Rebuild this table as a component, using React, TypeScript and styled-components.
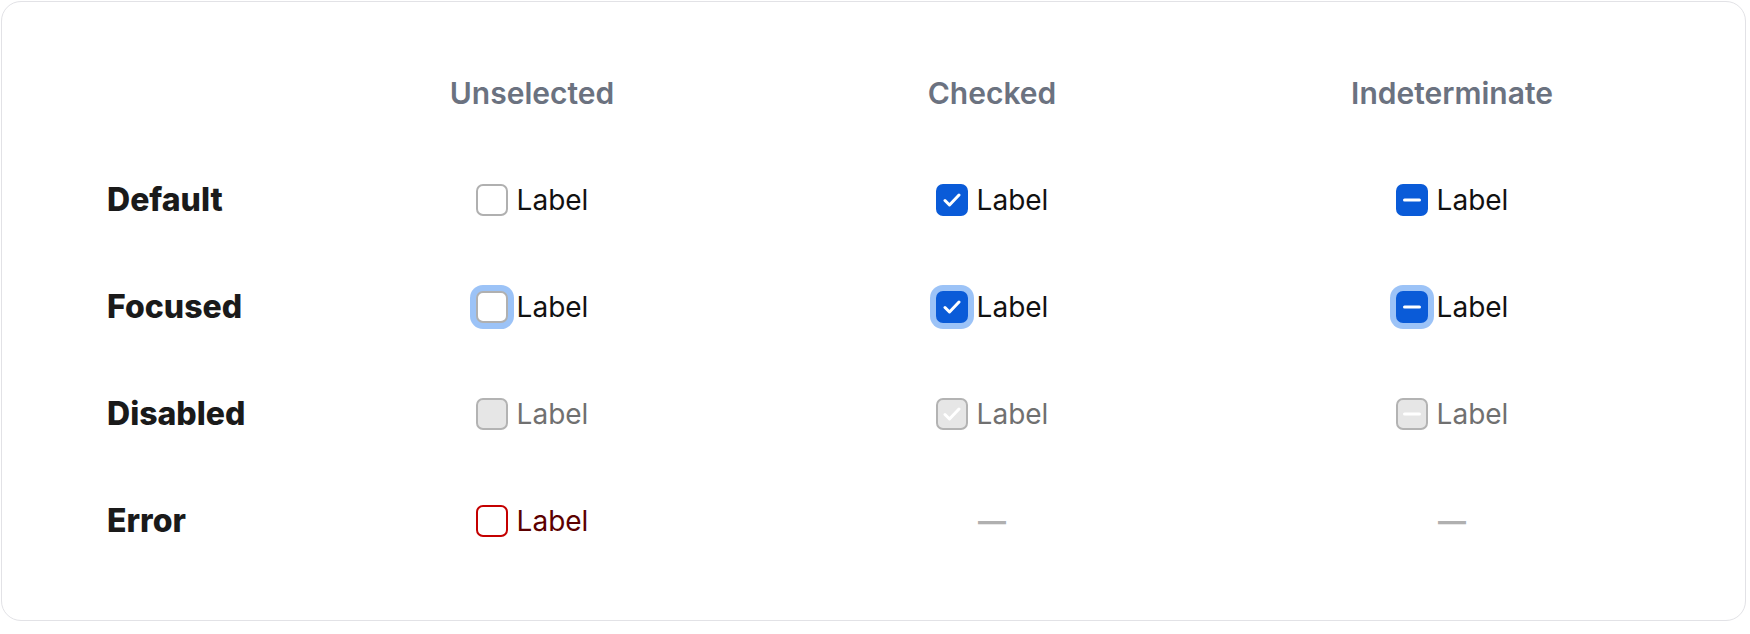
import React from "react";
import styled, { createGlobalStyle, css } from "styled-components";

const GlobalStyle = createGlobalStyle`
  html, body { margin: 0; padding: 0; background: #ffffff; }
  body { font-family: Inter, "Noto Sans", sans-serif; }
`;

const Page = styled.div`
  padding: 1px 4px 13px 1px;
`;

const Card = styled.div`
  width: 1745px;
  height: 620px;
  box-sizing: border-box;
  border: 1.5px solid #e2e2e6;
  border-radius: 20px;
  background: #fff;
  padding: 37px 63px 0 105px;
`;

const Grid = styled.div`
  display: grid;
  grid-template-columns: 195px repeat(3, 1fr);
  grid-auto-rows: 107px;
  align-items: center;
`;

const ColHead = styled.div`
  text-align: center;
  font-size: 30px;
  font-weight: 600;
  color: #6b7280;
`;

const RowHead = styled.div`
  font-size: 32px;
  font-weight: 800;
  color: #1a1a1a;
`;

const Cell = styled.div`
  display: flex;
  justify-content: center;
  align-items: center;
`;

const Option = styled.label`
  display: inline-flex;
  align-items: center;
  gap: 9px;
`;

type Variant = "default" | "disabled" | "error";

const Box = styled.span<{ $checked?: boolean; $variant: Variant; $focus?: boolean }>`
  width: 32px;
  height: 32px;
  box-sizing: border-box;
  border-radius: 7px;
  display: inline-flex;
  align-items: center;
  justify-content: center;
  border: 2px solid #b0b0b0;
  background: #fff;
  ${(p) =>
    p.$checked &&
    css`
      background: #0a5bd8;
      border-color: #0a5bd8;
    `}
  ${(p) =>
    p.$variant === "disabled" &&
    css`
      background: #e6e6e6;
      border-color: #b3b3b3;
    `}
  ${(p) =>
    p.$variant === "error" &&
    css`
      border-color: #c40000;
    `}
  ${(p) =>
    p.$focus &&
    css`
      box-shadow: 0 0 0 6px #9cc3f7;
    `}
`;

const Text = styled.span<{ $variant: Variant }>`
  font-size: 28px;
  font-weight: 400;
  line-height: 1;
  color: ${(p) =>
    p.$variant === "disabled" ? "#707070" : p.$variant === "error" ? "#5c0000" : "#111111"};
`;

const Dash = styled.span`
  font-size: 28px;
  font-weight: 700;
  color: #b0b0b0;
`;

type State = "unchecked" | "checked" | "indeterminate";

const Mark = ({ state }: { state: State }) => {
  if (state === "checked")
    return (
      <svg width="18" height="14" viewBox="0 0 18 14">
        <polyline points="2,7.5 6.5,12 16,2" fill="none" stroke="#fff" strokeWidth="3" strokeLinecap="round" strokeLinejoin="round" />
      </svg>
    );
  if (state === "indeterminate")
    return (
      <svg width="18" height="4" viewBox="0 0 18 4">
        <line x1="1.5" y1="2" x2="16.5" y2="2" stroke="#fff" strokeWidth="3" strokeLinecap="round" />
      </svg>
    );
  return null;
};

const Checkbox = ({ state, variant, focus }: { state: State; variant: Variant; focus?: boolean }) => (
  <Option>
    <Box $checked={state !== "unchecked"} $variant={variant} $focus={focus}>
      <Mark state={state} />
    </Box>
    <Text $variant={variant}>Label</Text>
  </Option>
);

const rows: { name: string; variant: Variant; focus?: boolean; errorOnly?: boolean }[] = [
  { name: "Default", variant: "default" },
  { name: "Focused", variant: "default", focus: true },
  { name: "Disabled", variant: "disabled" },
  { name: "Error", variant: "error", errorOnly: true },
];

const states: State[] = ["unchecked", "checked", "indeterminate"];

export default function App() {
  return (
    <>
      <GlobalStyle />
      <Page>
        <Card>
          <Grid>
            <div />
            <ColHead>Unselected</ColHead>
            <ColHead>Checked</ColHead>
            <ColHead>Indeterminate</ColHead>
            {rows.map((r) => (
              <React.Fragment key={r.name}>
                <RowHead>{r.name}</RowHead>
                {states.map((s) => (
                  <Cell key={s}>
                    {r.errorOnly && s !== "unchecked" ? (
                      <Dash>—</Dash>
                    ) : (
                      <Checkbox state={s} variant={r.variant} focus={r.focus} />
                    )}
                  </Cell>
                ))}
              </React.Fragment>
            ))}
          </Grid>
        </Card>
      </Page>
    </>
  );
}
